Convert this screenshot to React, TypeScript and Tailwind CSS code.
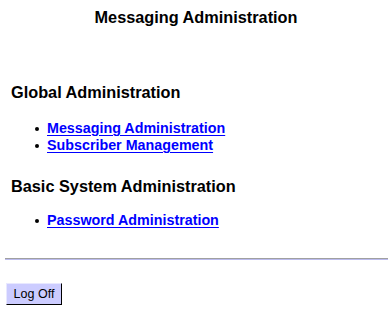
import React from 'react';

const globalLinks = ['Messaging Administration', 'Subscriber Management'];
const systemLinks = ['Password Administration'];

function LinkList({ items, gap }: { items: string[]; gap: string }) {
  return (
    <ul className={`${gap} ml-[47px] text-[14.3px] font-bold leading-[17px]`}>
      {items.map(label => (
        <li key={label} className="relative">
          <span className="absolute left-[-12px] top-[7px] w-[4px] h-[4px] rounded-full bg-black" />
          <a href="#" className="text-[#0000ff] underline underline-offset-[2px]">
            {label}
          </a>
        </li>
      ))}
    </ul>
  );
}

export default function App() {
  return (
    <div className="w-[392px] h-[313px] bg-white text-black font-['Liberation_Sans',Arial,sans-serif] pt-[8px]">
      {/* Page title */}
      <h1 className="text-center text-[16.3px] font-bold leading-[18px]">Messaging Administration</h1>

      {/* Global */}
      <h2 className="mt-[57px] ml-[11px] text-[16.3px] font-bold leading-[18px]">Global Administration</h2>
      <LinkList items={globalLinks} gap="mt-[19px]" />

      {/* Basic system */}
      <h2 className="mt-[23px] ml-[11px] text-[16.3px] font-bold leading-[18px]">Basic System Administration</h2>
      <LinkList items={systemLinks} gap="mt-[17px]" />

      {/* Divider */}
      <div className="mt-[29px] ml-[5px] mr-[4px] border-t border-t-[#a0a0a0] border-b border-b-[#bbbbee]" />

      {/* Log off */}
      <div className="mt-[21px] ml-[6px]">
        <button className="h-[22px] w-[56px] bg-[#ccccff] text-[12.5px] leading-none border border-t-[#e8e8ff] border-l-[#e8e8ff] border-r-black border-b-black">
          Log Off
        </button>
      </div>
    </div>
  );
}
